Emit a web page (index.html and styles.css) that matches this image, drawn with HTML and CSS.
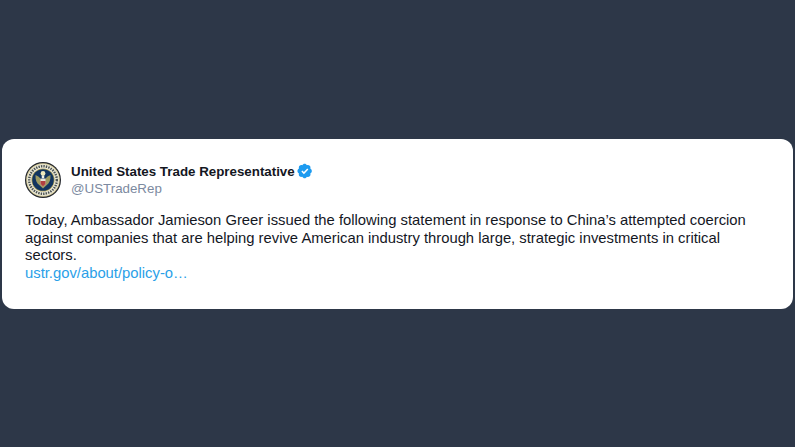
FILE: index.html
```html
<!DOCTYPE html>
<html lang="en">
<head>
<meta charset="utf-8">
<title>Tweet</title>
<link rel="stylesheet" href="styles.css">
</head>
<body>
<main class="stage">
  <article class="card">
    <header class="head">
      <svg class="avatar" width="36" height="36" viewBox="0 0 36 36">
        <circle cx="18" cy="18" r="18" fill="#23262c"/>
        <circle cx="18" cy="18" r="16.800" fill="#d8cf9e"/>
        <circle cx="18" cy="18" r="15.800" fill="#ece9da"/>
        <circle cx="18" cy="18" r="13.800" fill="none" stroke="#4a5250" stroke-width="2.400" stroke-dasharray="1.400 1.100"/>
        <circle cx="18" cy="18" r="11.600" fill="#b5a85e"/>
        <circle cx="18" cy="18" r="10.800" fill="#123560"/>
        <path d="M10.500 13c2 .8 4 2 5.300 4h4.400c1.300-2 3.300-3.200 5.300-4 .2 5-1 8.200-4 10.200l-3.500 3.300-3.500-3.300c-3-2-4.200-5.200-4-10.200z" fill="#9c9a63"/>
        <path d="M15.500 16.500h5v5.500l-2.500 2.600-2.500-2.600z" fill="#e6e4da"/>
        <path d="M15.500 19h5v3l-2.500 2.600-2.500-2.600z" fill="#b04040"/>
        <circle cx="18" cy="11.500" r="2.400" fill="#efe9bd"/>
        <circle cx="18" cy="15" r="1.400" fill="#f2f1e6"/>
      </svg>
      <div class="names">
        <div class="name-row">
          <span class="name">United States Trade Representative</span>
          <svg class="badge" width="16" height="16" viewBox="0 0 22 22">
            <path fill="#1d9bf0" d="M20.400 11c0-1.400-.8-2.700-2.100-3.300.5-1.300.2-2.800-.8-3.800s-2.400-1.200-3.800-.8C13.100 1.900 11.900 1 10.500 1S7.900 1.900 7.300 3.100c-1.300-.5-2.800-.2-3.800.8s-1.200 2.500-.8 3.800C1.500 8.300.6 9.600.6 11s.9 2.700 2.100 3.300c-.5 1.300-.2 2.800.8 3.800s2.500 1.200 3.800.8c.6 1.200 1.800 2.100 3.200 2.100s2.600-.9 3.200-2.100c1.400.5 2.800.2 3.800-.8s1.300-2.500.8-3.800c1.300-.6 2.100-1.900 2.100-3.300z"/>
            <path fill="#fff" d="M9.500 15.300l-3.500-3.500 1.400-1.400 2.100 2.100 4.600-5 1.500 1.300z"/>
          </svg>
        </div>
        <div class="handle">@USTradeRep</div>
      </div>
    </header>
    <p class="text">Today, Ambassador Jamieson Greer issued the following statement in response to China’s attempted coercion against companies that are helping revive American industry through large, strategic investments in critical sectors.<br><a class="link" href="#">ustr.gov/about/policy-o…</a></p>
  </article>
</main>
</body>
</html>
```
FILE: styles.css
```css
html, body {
  margin: 0;
  height: 100%;
}
body {
  background: #2d3748;
  font-family: "Liberation Sans", Arial, sans-serif;
}
.stage {
  height: 100%;
  box-sizing: border-box;
  padding: 139px 2px 138px;
}
.card {
  height: 170px;
  box-sizing: border-box;
  background: #fff;
  border-radius: 12px;
  padding: 23px 23px 0;
}
.head {
  display: flex;
  align-items: center;
  gap: 10px;
  height: 36px;
}
.avatar { flex: none; }
.names { display: flex; flex-direction: column; }
.name-row {
  display: flex;
  align-items: center;
  gap: 2px;
  height: 17.500px;
}
.name {
  font-size: 13.330px;
  font-weight: 700;
  color: #14171f;
}
.badge { flex: none; }
.handle {
  font-size: 13.330px;
  line-height: 17.500px;
  color: #7c8aa0;
}
.text {
  margin: 14px 0 0;
  font-size: 14.800px;
  line-height: 17.600px;
  color: #14171f;
}
.link {
  color: #2a9fe8;
  text-decoration: none;
}
```
